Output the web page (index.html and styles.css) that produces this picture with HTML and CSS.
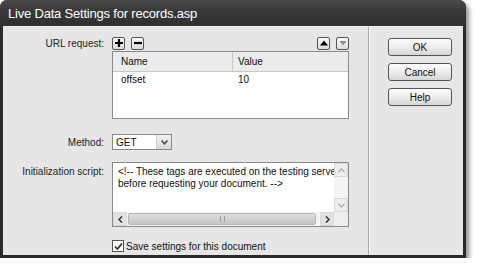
FILE: index.html
```html
<!DOCTYPE html>
<html>
<head>
  <meta charset="UTF-8">
  <title>Live Data Settings</title>
  <link rel="stylesheet" href="styles.css">
</head>
<body>
<div class="win">
  <div class="title">Live Data Settings for records.asp</div>
  <div class="body">
    <div class="main">
      <label class="lbl lbl-url">URL request:</label>
      <div class="urlrow">
        <span class="sq"><svg width="10" height="10" viewBox="0 0 10 10"><path d="M5 1v8M1 5h8" stroke="#000" stroke-width="2.2"/></svg></span>
        <span class="sq"><svg width="10" height="10" viewBox="0 0 10 10"><path d="M1 5h8" stroke="#000" stroke-width="2.2"/></svg></span>
        <span class="grow"></span>
        <span class="sq"><svg width="10" height="10" viewBox="0 0 10 10"><path d="M1 7.5L5 2.5 9 7.5z" fill="#000"/></svg></span>
        <span class="sq"><svg width="10" height="10" viewBox="0 0 10 10"><path d="M1.5 3L5 7.5 8.5 3z" fill="#8c8c8c"/></svg></span>
      </div>
      <div class="c2 grid">
        <div class="ghead"><span class="gc1">Name</span><span class="gc2">Value</span></div>
        <div class="grow-row"><span class="gc1">offset</span><span class="gc2">10</span></div>
      </div>

      <label class="lbl lbl-method">Method:</label>
      <div class="c2 select"><span class="selval">GET</span><span class="selbtn"><svg width="7" height="5" viewBox="0 0 7 5"><path d="M0.5 0.5L3.5 3.8 6.5 0.5" fill="none" stroke="#444" stroke-width="1.5"/></svg></span></div>

      <label class="lbl lbl-init">Initialization script:</label>
      <div class="c2 tarea">
        <div class="tatext">&lt;!-- These tags are executed on the testing serve<br>before requesting your document. --&gt;</div>
        <div class="vbar">
          <span class="sbtn"><svg width="7" height="5" viewBox="0 0 7 5"><path d="M0.5 4L3.5 1 6.5 4" fill="none" stroke="#aaa" stroke-width="1.3"/></svg></span>
          <span class="sbtn"><svg width="7" height="5" viewBox="0 0 7 5"><path d="M0.5 1L3.5 4 6.5 1" fill="none" stroke="#aaa" stroke-width="1.3"/></svg></span>
        </div>
        <div class="hbar">
          <span class="sbtn"><svg width="5" height="7" viewBox="0 0 5 7"><path d="M4 0.5L1 3.5 4 6.5" fill="none" stroke="#333" stroke-width="1.5"/></svg></span>
          <span class="thumb"><span class="grip"></span></span>
          <span class="sbtn"><svg width="5" height="7" viewBox="0 0 5 7"><path d="M1 0.5L4 3.5 1 6.5" fill="none" stroke="#333" stroke-width="1.5"/></svg></span>
        </div>
        <div class="corner"></div>
      </div>

      <div class="c2 check"><span class="box"><svg width="9" height="9" viewBox="0 0 9 9"><path d="M1 4.5L3.5 7 8 1.5" fill="none" stroke="#222" stroke-width="1.6"/></svg></span>Save settings for this document</div>
    </div>
    <div class="side">
      <button class="btn">OK</button>
      <button class="btn">Cancel</button>
      <button class="btn">Help</button>
    </div>
  </div>
</div>
</body>
</html>
```
FILE: styles.css
```css
*{margin:0;padding:0;box-sizing:border-box;}
body{background:#fff;font-family:"Liberation Sans",Arial,sans-serif;font-size:10px;color:#111;}
.win{
  width:466px;height:258px;
  background:#2a2a2a;
  padding:0 3px 3px;
  border-radius:7px 7px 0 0;
  box-shadow:3px 4px 5px rgba(0,0,0,.45);
  display:flex;flex-direction:column;
}
.title{
  height:26px;
  color:#fff;font-size:13px;letter-spacing:-0.2px;
  padding:6px 0 0 8px;
  background:linear-gradient(#4a4a4a,#3a3a3a 40%,#2f2f2f);
  margin:0 -3px;
  border-radius:7px 7px 0 0;
}
.body{flex:1;background:#e6e6e6;display:flex;border-top:1px solid #f4f4f4;}
.main{
  width:366px;
  display:grid;
  grid-template-columns:101px 237px;
  column-gap:8px;
  align-content:start;
  padding-top:9px;
  border-right:1px solid #a8a8a8;
}
.lbl{text-align:right;color:#222;}
.lbl-url{grid-row:1;align-self:center;}
.urlrow{display:flex;gap:6px;align-items:center;height:14px;}
.urlrow .grow{flex:1;}
.sq{
  width:13px;height:13px;
  border:1px solid #555;border-radius:2px;
  background:linear-gradient(#fafafa,#dcdcdc);
  display:flex;align-items:center;justify-content:center;
}
.c2{grid-column:2;}
.grid{margin-top:1px;height:68px;border:1px solid #8a8a8a;background:#fff;}
.ghead{display:flex;height:20px;align-items:center;background:#ebebeb;border-bottom:1px solid #c8c8c8;}
.grow-row{display:flex;height:14px;align-items:center;}
.gc1{width:120px;padding-left:8px;}
.ghead .gc1{border-right:1px solid #c8c8c8;height:100%;display:flex;align-items:center;}
.gc2{padding-left:5px;}
.lbl-method{align-self:center;margin-top:15px;}
.select{
  margin-top:15px;width:60px;height:16px;
  border:1px solid #8a8a8a;background:#fff;
  display:flex;
}
.selval{flex:1;padding:2px 0 0 3px;}
.selbtn{width:15px;background:linear-gradient(#f2f2f2,#d8d8d8);border-left:1px solid #ccc;display:flex;align-items:center;justify-content:center;}
.lbl-init{margin-top:16px;}
.tarea{
  margin-top:12px;height:65px;
  border:1px solid #8a8a8a;background:#fff;
  display:grid;grid-template-columns:1fr 14px;grid-template-rows:1fr 14px;
}
.tatext{padding:3px 0 0 5px;line-height:12px;overflow:hidden;white-space:nowrap;}
.vbar{background:#f4f4f4;display:flex;flex-direction:column;justify-content:space-between;}
.hbar{background:#f4f4f4;display:flex;}
.sbtn{width:14px;height:14px;display:flex;align-items:center;justify-content:center;background:#eee;border:1px solid #d8d8d8;}
.hbar .sbtn{background:#e2e2e2;}
.thumb{flex:1;margin:1px 4px 1px 1px;background:linear-gradient(#dedede,#c4c4c4);border:1px solid #b8b8b8;border-radius:2px;display:flex;align-items:center;justify-content:center;}
.grip{width:5px;height:6px;border-left:1px solid #999;border-right:1px solid #999;}
.corner{background:#eee;}
.check{margin-top:13px;display:flex;align-items:center;gap:2px;height:12px;}
.box{width:12px;height:12px;border:1px solid #555;background:#fff;display:flex;align-items:center;justify-content:center;}
.side{flex:1;display:flex;flex-direction:column;gap:7px;padding:11px 0 0 18px;border-left:1px solid #fafafa;}
.btn{
  width:64px;height:18px;
  font:inherit;font-size:10px;color:#111;
  border:1px solid #555;border-radius:3px;
  background:linear-gradient(#fcfcfc,#e8e8e8 60%,#d6d6d6);
}
```
